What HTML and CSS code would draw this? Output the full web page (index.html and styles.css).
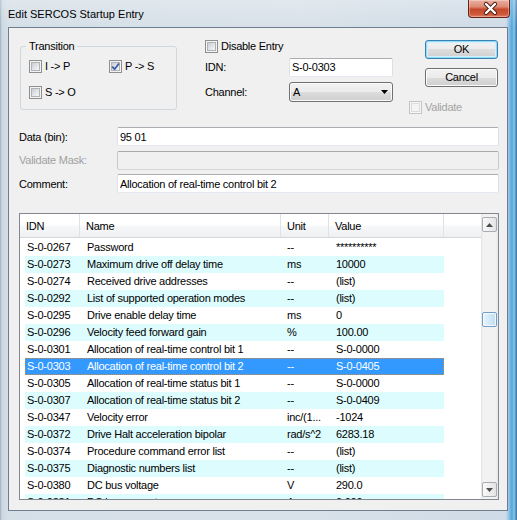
FILE: index.html
```html
<!DOCTYPE html>
<html>
<head>
<meta charset="utf-8">
<title>Edit SERCOS Startup Entry</title>
<link rel="stylesheet" href="styles.css">
</head>
<body>
<div class="window">
  <div class="titlebar">
    <span class="title">Edit SERCOS Startup Entry</span>
    <div class="close">
      <svg width="42" height="17" viewBox="0 0 42 17">
        <path d="M17 4 L26 13 M26 4 L17 13" stroke="#4a1a10" stroke-width="4.2" stroke-linecap="round" fill="none"/>
        <path d="M17 4 L26 13 M26 4 L17 13" stroke="#ffffff" stroke-width="2.4" stroke-linecap="round" fill="none"/>
      </svg>
    </div>
  </div>
  <div class="client">
    <div class="top">
      <fieldset class="group">
        <legend>Transition</legend>
        <div class="ggrid">
          <div class="chk"><span class="cb"><span class="cb-in"></span></span><span>I -&gt; P</span></div>
          <div class="chk"><span class="cb"><span class="cb-in"><svg class="tick" viewBox="0 0 9 9" width="9" height="9"><path d="M1.2 4.6 L3.6 7.2 L8 1.4" stroke="#3d5a9e" stroke-width="1.7" fill="none" stroke-linejoin="round"/></svg></span></span><span>P -&gt; S</span></div>
          <div class="chk"><span class="cb"><span class="cb-in"></span></span><span>S -&gt; O</span></div>
        </div>
      </fieldset>
      <div class="mid">
        <div class="chk"><span class="cb"><span class="cb-in"></span></span><span>Disable Entry</span></div>
        <div class="frow"><span class="flabel">IDN:</span><div class="edit idn">S-0-0303</div></div>
        <div class="frow ch"><span class="flabel">Channel:</span><div class="combo"><span>A</span><svg class="carrow" width="7" height="4" viewBox="0 0 7 4"><polygon points="0,0 7,0 3.5,4" fill="#000"/></svg></div></div>
      </div>
      <div class="right">
        <div class="btn default">OK</div>
        <div class="btn">Cancel</div>
        <div class="chk disabled"><span class="cb"><span class="cb-in"></span></span><span>Validate</span></div>
      </div>
    </div>

    <div class="fields">
      <span class="flabel2">Data (bin):</span><div class="edit">95 01</div>
      <span class="flabel2 dis">Validate Mask:</span><div class="edit off"></div>
      <span class="flabel2">Comment:</span><div class="edit">Allocation of real-time control bit 2</div>
    </div>

    <div class="list">
      <div class="lmain">
        <div class="lhead">
          <div class="hc h1">IDN</div>
          <div class="hc h2">Name</div>
          <div class="hc h3">Unit</div>
          <div class="hc h4">Value</div>
          <div class="hc hfill"></div>
        </div>
        <div class="lbody">
          <div class="row"><span class="c1">S-0-0267</span><span class="c2">Password</span><span class="c3">--</span><span class="c4">**********</span></div>
          <div class="row alt"><span class="c1">S-0-0273</span><span class="c2">Maximum drive off delay time</span><span class="c3">ms</span><span class="c4">10000</span></div>
          <div class="row"><span class="c1">S-0-0274</span><span class="c2">Received drive addresses</span><span class="c3">--</span><span class="c4">(list)</span></div>
          <div class="row alt"><span class="c1">S-0-0292</span><span class="c2">List of supported operation modes</span><span class="c3">--</span><span class="c4">(list)</span></div>
          <div class="row"><span class="c1">S-0-0295</span><span class="c2">Drive enable delay time</span><span class="c3">ms</span><span class="c4">0</span></div>
          <div class="row alt"><span class="c1">S-0-0296</span><span class="c2">Velocity feed forward gain</span><span class="c3">%</span><span class="c4">100.00</span></div>
          <div class="row"><span class="c1">S-0-0301</span><span class="c2">Allocation of real-time control bit 1</span><span class="c3">--</span><span class="c4">S-0-0000</span></div>
          <div class="row sel"><span class="c1">S-0-0303</span><span class="c2">Allocation of real-time control bit 2</span><span class="c3">--</span><span class="c4">S-0-0405</span></div>
          <div class="row"><span class="c1">S-0-0305</span><span class="c2">Allocation of real-time status bit 1</span><span class="c3">--</span><span class="c4">S-0-0000</span></div>
          <div class="row alt"><span class="c1">S-0-0307</span><span class="c2">Allocation of real-time status bit 2</span><span class="c3">--</span><span class="c4">S-0-0409</span></div>
          <div class="row"><span class="c1">S-0-0347</span><span class="c2">Velocity error</span><span class="c3">inc/(1...</span><span class="c4">-1024</span></div>
          <div class="row alt"><span class="c1">S-0-0372</span><span class="c2">Drive Halt acceleration bipolar</span><span class="c3">rad/s^2</span><span class="c4">6283.18</span></div>
          <div class="row"><span class="c1">S-0-0374</span><span class="c2">Procedure command error list</span><span class="c3">--</span><span class="c4">(list)</span></div>
          <div class="row alt"><span class="c1">S-0-0375</span><span class="c2">Diagnostic numbers list</span><span class="c3">--</span><span class="c4">(list)</span></div>
          <div class="row"><span class="c1">S-0-0380</span><span class="c2">DC bus voltage</span><span class="c3">V</span><span class="c4">290.0</span></div>
          <div class="row alt"><span class="c1">S-0-0381</span><span class="c2">DC bus current</span><span class="c3">A</span><span class="c4">0.000</span></div>
        </div>
      </div>
      <div class="sbar">
        <div class="sbtn up"><svg width="7" height="4" viewBox="0 0 7 4"><polygon points="0,4 7,4 3.5,0" fill="#4e4e4e"/></svg></div>
        <div class="thumb"></div>
        <div class="sspace"></div>
        <div class="sbtn down"><svg width="7" height="4" viewBox="0 0 7 4"><polygon points="0,0 7,0 3.5,4" fill="#4e4e4e"/></svg></div>
      </div>
    </div>
  </div>
</div>
</body>
</html>
```

FILE: styles.css
```css
* { box-sizing: border-box; }
html, body { margin: 0; padding: 0; }
body {
  width: 517px;
  height: 520px;
  overflow: hidden;
  font-family: "Liberation Sans", Arial, sans-serif;
  font-size: 11px;
  letter-spacing: -0.25px;
  color: #000;
  background: #fff;
}

.window {
  width: 517px;
  height: 520px;
  display: flex;
  flex-direction: column;
  background:
    linear-gradient(180deg, rgba(255,255,255,0.25) 0, rgba(255,255,255,0) 27px),
    linear-gradient(90deg, #9fb0c0 0px, #cdd8e2 2px, #d5dfe7 8px, #d8e1e9 300px, #cfdbe6 506px, #8fc0e4 509px, #4fa4dc 512px, #86c8ee 514px, #3d6d96 517px);
}

.titlebar {
  height: 27px;
  flex: none;
  display: flex;
  align-items: flex-start;
  padding-left: 8px;
}
.title {
  margin-top: 8px;
  font-size: 11px;
  line-height: 13px;
  letter-spacing: 0;
  color: #000;
}
.close {
  margin-left: auto;
  margin-right: 7px;
  width: 42px;
  height: 18px;
  border: 1px solid #6a2114;
  border-top: none;
  border-radius: 0 0 4px 4px;
  background: linear-gradient(180deg, #eab0a2 0%, #dc8a73 40%, #c5472c 55%, #cf5a3c 85%, #e0836a 100%);
  box-shadow: inset 0 0 0 1px rgba(255,255,255,0.3);
}
.close svg { display: block; }

.client {
  flex: 1;
  margin: 0 9px 9px 8px;
  border: 1px solid #6f7e8d;
  background: #f0f0f0;
  display: flex;
  flex-direction: column;
  padding: 12px 8px 10px 10px;
}

/* top section */
.top {
  display: flex;
  height: 74px;
  flex: none;
}
.group {
  margin: 0 0 0 1px;
  padding: 0 0 0 8px;
  width: 157px;
  height: 70px;
  border: 1px solid #d0d7dd;
  border-radius: 3px;
  min-width: 0;
}
.group legend {
  padding: 0 3px;
  margin-left: -3px;
  line-height: 13px;
}
.ggrid {
  display: grid;
  grid-template-columns: 80px 1fr;
  grid-auto-rows: 13px;
  row-gap: 13px;
  padding-top: 7px;
}

.chk {
  display: flex;
  align-items: center;
  gap: 3px;
  height: 13px;
  line-height: 13px;
  white-space: nowrap;
}
.cb {
  width: 13px;
  height: 13px;
  flex: none;
  border: 1px solid #8e8f8f;
  background: #f4f4f4;
  padding: 1px;
  display: flex;
}
.cb-in {
  flex: 1;
  border: 1px solid #aeb3b9;
  background: linear-gradient(135deg, #c9cdd3 0%, #e3e5e8 55%, #f7f7f7 100%);
  position: relative;
}
.tick {
  display: block;
  margin: -1px;
  overflow: visible;
}
.chk.disabled { color: #a3a3a3; }
.chk.disabled .cb { border-color: #c4c4c4; background: #f7f7f7; }
.chk.disabled .cb-in { border-color: #dcdcdc; background: #f4f4f4; }

.mid {
  margin-left: 28px;
  width: 188px;
  display: flex;
  flex-direction: column;
}
.frow {
  display: flex;
  align-items: center;
  height: 20px;
  margin-top: 4px;
}
.frow.ch { margin-top: 5px; }
.flabel { width: 84px; flex: none; }
.idn { width: 104px; height: 20px; }

.combo {
  width: 104px;
  height: 20px;
  border: 1px solid #707070;
  border-radius: 3px;
  background: linear-gradient(180deg, #f2f2f2 0%, #ebebeb 50%, #dddddd 50%, #cfcfcf 100%);
  box-shadow: inset 0 0 0 1px #fbfbfb;
  display: flex;
  align-items: center;
  padding-left: 3px;
}
.carrow { margin-left: auto; margin-right: 4px; display: block; }

.right {
  margin-left: auto;
  margin-right: 1px;
  width: 89px;
  display: flex;
  flex-direction: column;
  align-items: flex-end;
}
.btn {
  width: 73px;
  height: 19px;
  border: 1px solid #707070;
  border-radius: 3px;
  background: linear-gradient(180deg, #f2f2f2 0%, #ebebeb 50%, #dddddd 50%, #cfcfcf 100%);
  box-shadow: inset 0 0 0 1px #fcfcfc;
  display: flex;
  align-items: center;
  justify-content: center;
  line-height: 13px;
}
.btn.default {
  border-color: #3c7fb1;
  box-shadow: inset 0 0 0 1px #8fdcf8, inset 0 0 0 2px #d2f1fc;
}
.btn + .btn { margin-top: 9px; }
.right .chk { align-self: flex-start; margin-top: 14px; }

/* edit fields */
.fields {
  display: grid;
  grid-template-columns: 98px 1fr;
  grid-auto-rows: 19px;
  row-gap: 4.5px;
  margin-top: 13px;
  align-items: center;
  flex: none;
}
.flabel2 { white-space: nowrap; }
.flabel2.dis { color: #a0a0a0; }
.edit {
  height: 19px;
  background: #fff;
  border: 1px solid;
  border-color: #abadb3 #dbdfe6 #e3e9ef #e2e3ea;
  border-radius: 2px;
  padding-left: 2px;
  display: flex;
  align-items: center;
  white-space: nowrap;
  overflow: hidden;
}
.edit.off {
  background: #f0f0f0;
  border-color: #a9a9a9 #c9c9c9 #d4d4d4 #c9c9c9;
}

/* list view */
.list {
  margin-top: 20px;
  height: 287px;
  flex: none;
  border: 1px solid #828790;
  background: #fff;
  display: flex;
}
.lmain {
  flex: 1;
  min-width: 0;
  display: flex;
  flex-direction: column;
  overflow: hidden;
}
.lhead {
  height: 24px;
  flex: none;
  display: flex;
  background: linear-gradient(180deg, #ffffff 0%, #ffffff 45%, #f6f7f8 55%, #eff0f2 100%);
  border-bottom: 1px solid #d5d5d5;
}
.hc {
  display: flex;
  align-items: center;
  padding-left: 6px;
  border-right: 1px solid #dfe2e6;
  flex: none;
}
.h1 { width: 60px; }
.h2 { width: 201px; }
.h3 { width: 48px; }
.h4 { width: 115px; }
.hc.hfill { flex: 1; border-right: none; }

.lbody { padding-top: 1px; }
.row {
  display: flex;
  margin-left: 5px;
  width: 419px;
  height: 17px;
  line-height: 17px;
  white-space: nowrap;
}
.row.alt { background: #ddfcfe; }
.row.sel {
  background: #3399ff;
  color: #fff;
  outline: 1px dotted #d8893a;
  outline-offset: -1px;
}
.row span { overflow: hidden; flex: none; }
.c1 { width: 55px; padding-left: 2px; }
.c2 { width: 201px; padding-left: 7px; }
.c3 { width: 48px; padding-left: 6px; }
.c4 { width: 115px; padding-left: 7px; }

/* scrollbar */
.sbar {
  width: 17px;
  flex: none;
  display: flex;
  flex-direction: column;
  align-items: center;
  background: linear-gradient(90deg, #e2e2e2 0, #f2f2f2 2px, #f2f2f2 14px, #e8e8e8 17px);
}
.sbtn {
  width: 15px;
  height: 15px;
  border: 1px solid #a8adb3;
  border-radius: 2px;
  background: linear-gradient(90deg, #fafafa, #e3e3e3);
  display: flex;
  align-items: center;
  justify-content: center;
}
.sbtn svg { display: block; }
.sbtn.up { margin-top: 3px; }
.sbtn.down { margin-bottom: 2px; }
.thumb {
  margin-top: 80px;
  width: 15px;
  height: 15px;
  border: 1px solid #6e9fcb;
  border-radius: 2px;
  background: linear-gradient(90deg, #e8f4fc, #bfdef4);
  box-shadow: inset 0 0 0 1px #f4faff;
}
.sspace { flex: 1; }
```
